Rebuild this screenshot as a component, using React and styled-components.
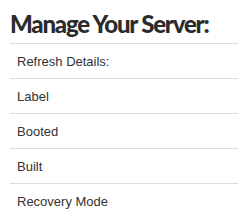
import React from "react";
import styled, { createGlobalStyle } from "styled-components";

const GlobalStyle = createGlobalStyle`
  body {
    margin: 0;
    background: #fff;
  }
`;

const Panel = styled.div`
  padding: 10px 0 0 10px;
`;

const Heading = styled.h2`
  margin: 0;
  height: 33px;
  white-space: nowrap;
  font-family: Lato, sans-serif;
  font-weight: 900;
  font-size: 24px;
  line-height: 28px;
  letter-spacing: -1.2px;
  color: #2b2b2b;
`;

const List = styled.ul`
  list-style: none;
  margin: 0;
  padding: 0;
`;

const Item = styled.li`
  border-top: 1px solid #dddddd;
  height: 34px;
  display: flex;
  align-items: center;
  padding-left: 7px;
  font-family: "Liberation Sans", Arial, sans-serif;
  font-size: 13px;
  color: #333;
`;

const items = ["Refresh Details:", "Label", "Booted", "Built", "Recovery Mode"];

const App = () => (
  <>
    <GlobalStyle />
    <Panel>
      <Heading>Manage Your Server:</Heading>
      <List>
        {items.map((t) => (
          <Item key={t}>{t}</Item>
        ))}
      </List>
    </Panel>
  </>
);

export default App;
